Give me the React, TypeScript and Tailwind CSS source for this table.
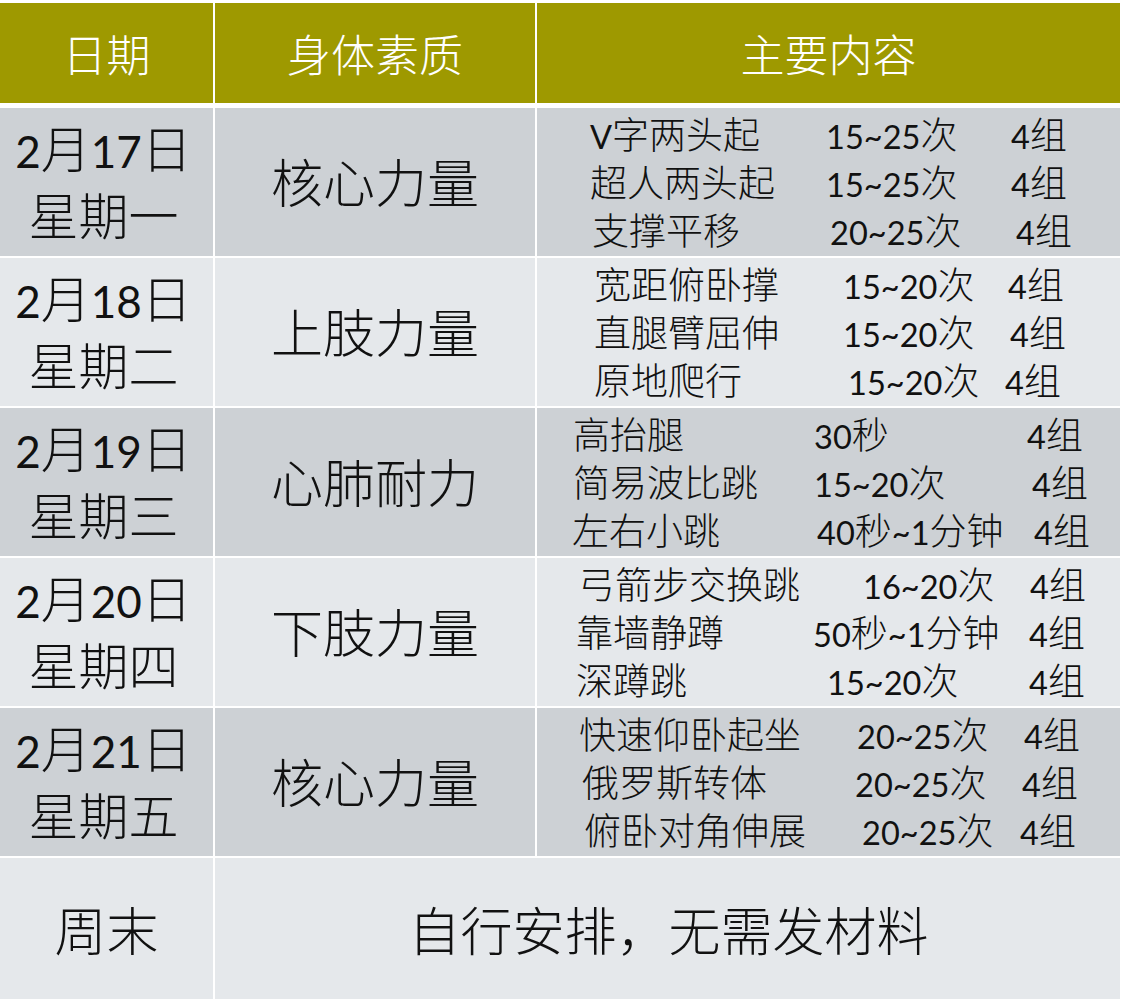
import React from "react";

function T({ s }: { s: string }) {
  const parts = s.split(/([\x00-\x7F]+)/).filter((p) => p.length > 0);
  return (
    <>
      {parts.map((p, i) =>
        /^[\x00-\x7F]+$/.test(p) ? (
          <span key={i} className="font-['Lato',sans-serif] font-normal text-[0.88em]">
            {p}
          </span>
        ) : (
          <span key={i}>{p}</span>
        )
      )}
    </>
  );
}

type Line = { name: string; count: string; x: [number, number, number] };

const rows: { date: string; week: string; kind: string; lines: Line[] }[] = [
  {
    date: "2月17日",
    week: "星期一",
    kind: "核心力量",
    lines: [
      { name: "V字两头起", count: "15~25次", x: [590, 826, 1011] },
      { name: "超人两头起", count: "15~25次", x: [590, 826, 1011] },
      { name: "支撑平移", count: "20~25次", x: [592, 830, 1016] },
    ],
  },
  {
    date: "2月18日",
    week: "星期二",
    kind: "上肢力量",
    lines: [
      { name: "宽距俯卧撑", count: "15~20次", x: [594, 843, 1008] },
      { name: "直腿臂屈伸", count: "15~20次", x: [594, 843, 1010] },
      { name: "原地爬行", count: "15~20次", x: [594, 848, 1005] },
    ],
  },
  {
    date: "2月19日",
    week: "星期三",
    kind: "心肺耐力",
    lines: [
      { name: "高抬腿", count: "30秒", x: [573, 814, 1027] },
      { name: "简易波比跳", count: "15~20次", x: [573, 814, 1032] },
      { name: "左右小跳", count: "40秒~1分钟", x: [572, 817, 1034] },
    ],
  },
  {
    date: "2月20日",
    week: "星期四",
    kind: "下肢力量",
    lines: [
      { name: "弓箭步交换跳", count: "16~20次", x: [578, 863, 1030] },
      { name: "靠墙静蹲", count: "50秒~1分钟", x: [576, 813, 1029] },
      { name: "深蹲跳", count: "15~20次", x: [576, 827, 1029] },
    ],
  },
  {
    date: "2月21日",
    week: "星期五",
    kind: "核心力量",
    lines: [
      { name: "快速仰卧起坐", count: "20~25次", x: [579, 857, 1024] },
      { name: "俄罗斯转体", count: "20~25次", x: [582, 855, 1022] },
      { name: "俯卧对角伸展", count: "20~25次", x: [584, 862, 1020] },
    ],
  },
];

export default function App() {
  return (
    <div className="w-[1125px] h-[999px] overflow-hidden bg-white pt-[3px] font-['Noto_Sans_CJK_SC',sans-serif] font-light text-[#111]">
      <div className="w-[1120px]">
        {/* header */}
        <div className="grid grid-cols-[213px_320px_583px] gap-x-[2px] h-[100px] text-white text-[44px]">
          <div className="bg-[#9e9900] flex items-center justify-center">日期</div>
          <div className="bg-[#9e9900] flex items-center justify-center">身体素质</div>
          <div className="bg-[#9e9900] flex items-center justify-center">主要内容</div>
        </div>
        {/* body */}
        <div className="mt-[5px] flex flex-col gap-y-[2px]">
          {rows.map((r, ri) => {
            const bg = ri % 2 === 0 ? "bg-[#cdd1d5]" : "bg-[#e5e8eb]";
            return (
              <div key={ri} className="grid grid-cols-[213px_320px_583px] gap-x-[2px] h-[148px]">
                <div className={`${bg} flex flex-col items-center justify-center text-[50px] leading-[62px] pr-[6px] pb-[6px]`}>
                  <div>
                    <T s={r.date} />
                  </div>
                  <div>{r.week}</div>
                </div>
                <div className={`${bg} flex items-center justify-center text-[52px] pb-[3px]`}>{r.kind}</div>
                <div className={`${bg} flex flex-col justify-center pt-[1px] text-[37px] leading-[44px]`}>
                  {r.lines.map((l, li) => (
                    <div
                      key={li}
                      className="flex whitespace-nowrap"
                      style={{ paddingLeft: l.x[0] - 537 }}
                    >
                      <span style={{ width: l.x[1] - l.x[0] }}>
                        <T s={l.name} />
                      </span>
                      <span style={{ width: l.x[2] - l.x[1] }}>
                        <T s={l.count} />
                      </span>
                      <span>
                        <T s="4组" />
                      </span>
                    </div>
                  ))}
                </div>
              </div>
            );
          })}
          <div className="grid grid-cols-[213px_905px] gap-x-[2px] h-[145px]">
            <div className="bg-[#e5e8eb] flex items-center justify-center text-[52px] pb-[4px]">周末</div>
            <div className="bg-[#e5e8eb] flex items-center justify-center text-[52px] pb-[4px] pl-[2px]">
              自行安排，无需发材料
            </div>
          </div>
        </div>
      </div>
    </div>
  );
}
